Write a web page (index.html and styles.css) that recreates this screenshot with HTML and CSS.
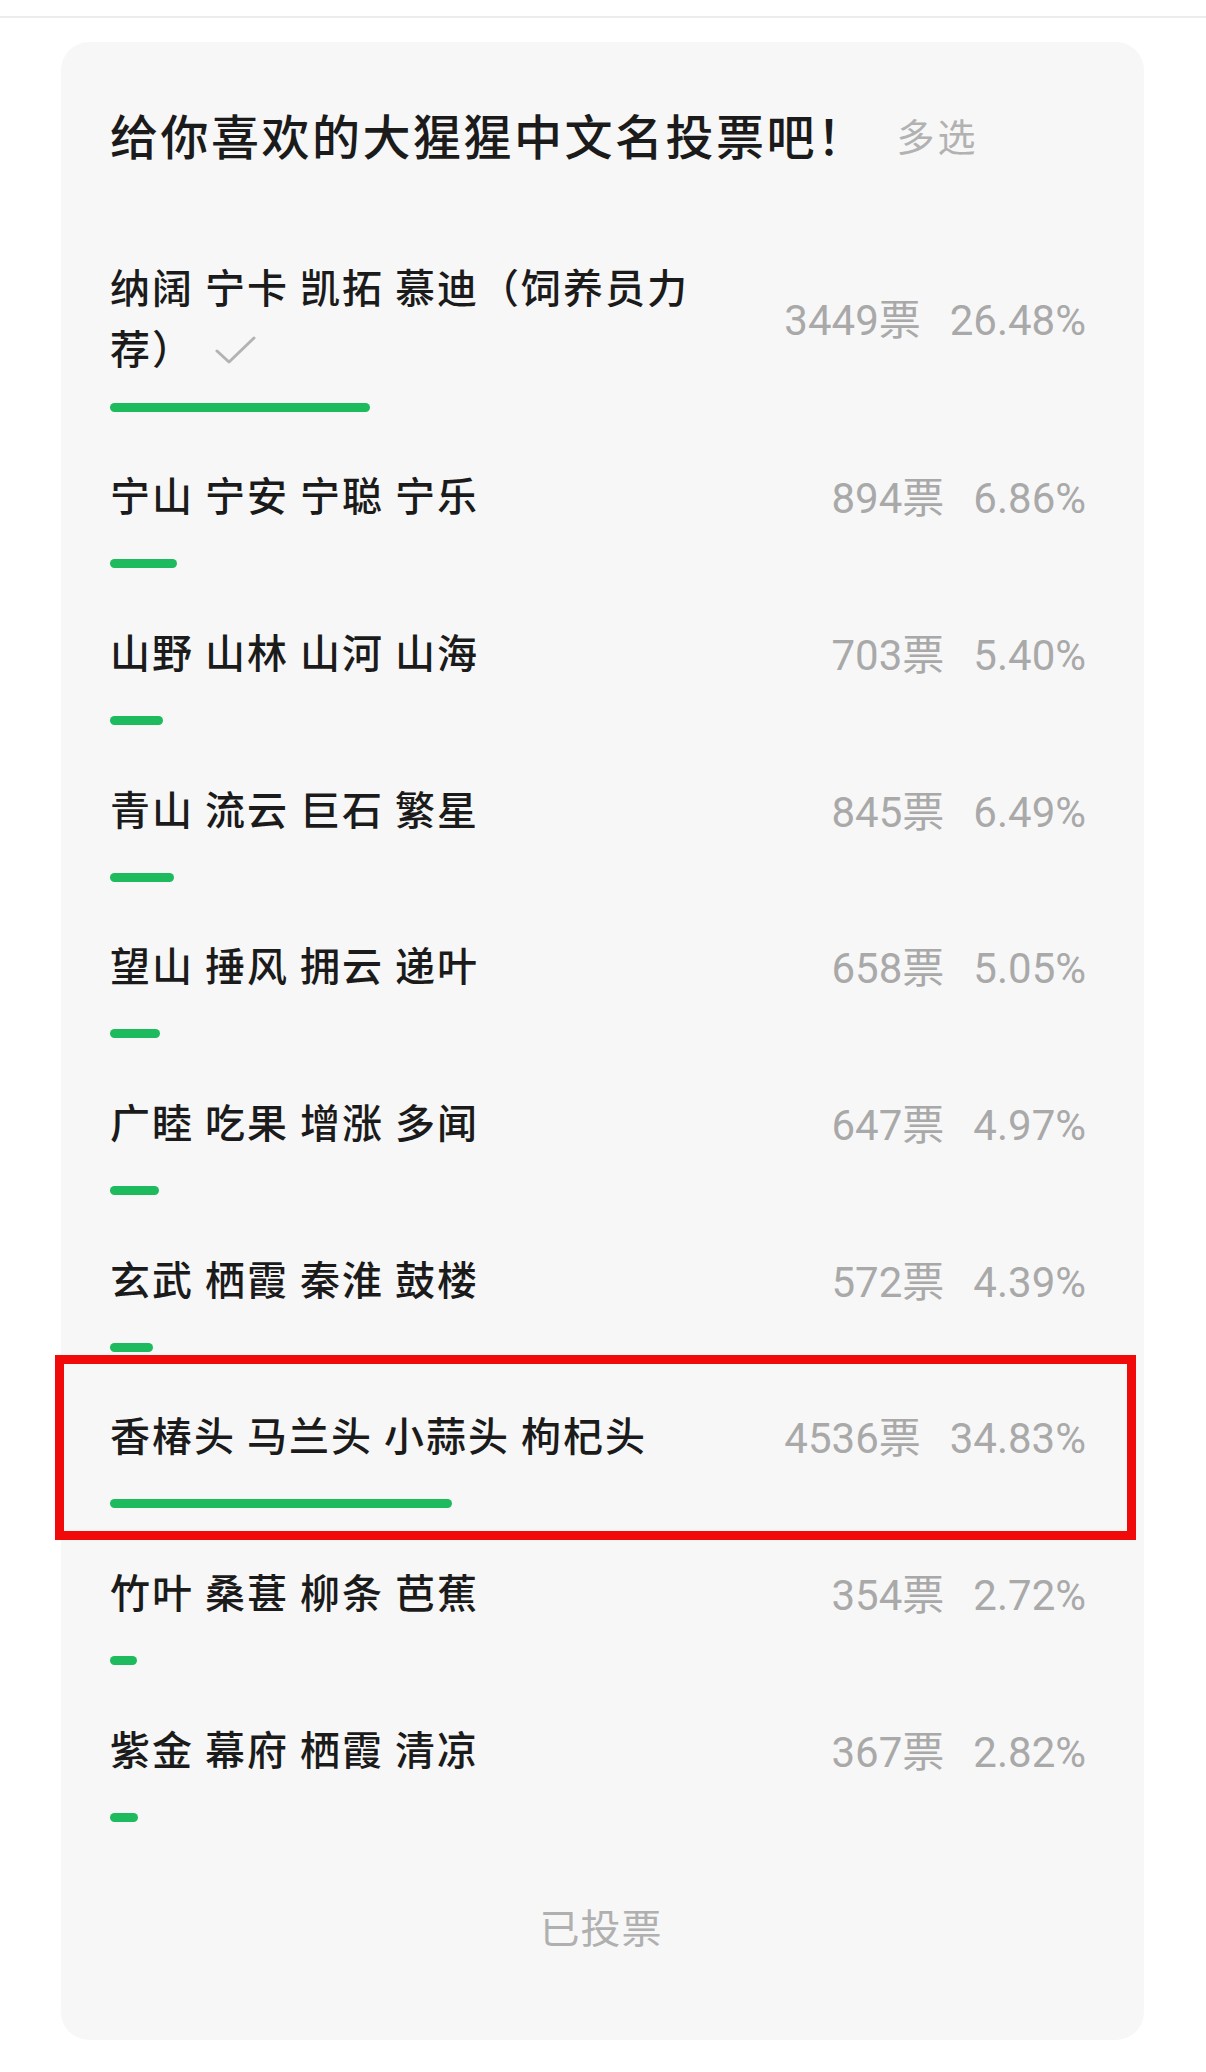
FILE: index.html
```html
<!DOCTYPE html>
<html lang="zh">

<head>
    <meta charset="UTF-8" />
    <meta name="viewport" content="width=device-width, initial-scale=1.0" />
    <title>投票</title>
    <link rel="stylesheet" href="styles.css">
</head>

<body>
    <div class="top-line"></div>

    <div class="poll-card">
        <div class="poll-title">
            <h1>给你喜欢的大猩猩中文名投票吧！</h1>
            <span class="poll-type">多选</span>
        </div>

        <div class="poll-list">
            <div class="option">
                <div class="option-head">
                    <div class="option-text">纳阔 宁卡 凯拓 慕迪（饲养员力荐）<svg class="check" width="42" height="30" viewBox="0 0 42 30"><path d="M2 15 L14 26 L39 2" fill="none" stroke="#b3b3b3" stroke-width="3" stroke-linecap="round" stroke-linejoin="round"/></svg></div>
                    <div class="option-stats"><span>3449票</span><span class="pct">26.48%</span></div>
                </div>
                <div class="bar" style="width: 26.48%"></div>
            </div>
            <div class="option">
                <div class="option-head">
                    <div class="option-text">宁山 宁安 宁聪 宁乐</div>
                    <div class="option-stats"><span>894票</span><span class="pct">6.86%</span></div>
                </div>
                <div class="bar" style="width: 6.86%"></div>
            </div>
            <div class="option">
                <div class="option-head">
                    <div class="option-text">山野 山林 山河 山海</div>
                    <div class="option-stats"><span>703票</span><span class="pct">5.40%</span></div>
                </div>
                <div class="bar" style="width: 5.40%"></div>
            </div>
            <div class="option">
                <div class="option-head">
                    <div class="option-text">青山 流云 巨石 繁星</div>
                    <div class="option-stats"><span>845票</span><span class="pct">6.49%</span></div>
                </div>
                <div class="bar" style="width: 6.49%"></div>
            </div>
            <div class="option">
                <div class="option-head">
                    <div class="option-text">望山 捶风 拥云 递叶</div>
                    <div class="option-stats"><span>658票</span><span class="pct">5.05%</span></div>
                </div>
                <div class="bar" style="width: 5.05%"></div>
            </div>
            <div class="option">
                <div class="option-head">
                    <div class="option-text">广睦 吃果 增涨 多闻</div>
                    <div class="option-stats"><span>647票</span><span class="pct">4.97%</span></div>
                </div>
                <div class="bar" style="width: 4.97%"></div>
            </div>
            <div class="option">
                <div class="option-head">
                    <div class="option-text">玄武 栖霞 秦淮 鼓楼</div>
                    <div class="option-stats"><span>572票</span><span class="pct">4.39%</span></div>
                </div>
                <div class="bar" style="width: 4.39%"></div>
            </div>
            <div class="option">
                <div class="highlight"></div>
                <div class="option-head">
                    <div class="option-text">香椿头 马兰头 小蒜头 枸杞头</div>
                    <div class="option-stats"><span>4536票</span><span class="pct">34.83%</span></div>
                </div>
                <div class="bar" style="width: 34.83%"></div>
            </div>
            <div class="option">
                <div class="option-head">
                    <div class="option-text">竹叶 桑葚 柳条 芭蕉</div>
                    <div class="option-stats"><span>354票</span><span class="pct">2.72%</span></div>
                </div>
                <div class="bar" style="width: 2.72%"></div>
            </div>
            <div class="option">
                <div class="option-head">
                    <div class="option-text">紫金 幕府 栖霞 清凉</div>
                    <div class="option-stats"><span>367票</span><span class="pct">2.82%</span></div>
                </div>
                <div class="bar" style="width: 2.82%"></div>
            </div>
        </div>

        <div class="voted">已投票</div>
    </div>
</body>

</html>
```

FILE: styles.css
```css
body {
    margin: 0;
    font-family: "Noto Sans CJK SC", sans-serif;
    background-color: #fff;
    color: #1b1b1b;
}

.top-line {
    height: 2px;
    margin-top: 16px;
    background-color: #ececec;
}

.poll-card {
    margin: 24px 62px 0 61px;
    padding: 62px 52px 84px 49px;
    background-color: #f7f7f7;
    border-radius: 28px;
}

.poll-title {
    display: flex;
    align-items: center;
}

.poll-title h1 {
    margin: 0;
    font-size: 48px;
    line-height: 60px;
    font-weight: 500;
    letter-spacing: 2.5px;
}

.poll-type {
    margin-left: 29px;
    font-size: 38px;
    letter-spacing: 3px;
    color: #b2b2b2;
}

.poll-list {
    margin-top: 91.5px;
}

.option {
    position: relative;
    padding-bottom: 43.7px;
}

.option-head {
    display: flex;
    align-items: center;
    min-height: 79px;
}

.option-text {
    width: 600px;
    font-size: 40px;
    line-height: 61px;
    font-weight: 500;
    letter-spacing: 2px;
}

.check {
    margin-left: 21px;
    vertical-align: -2px;
}

.option-stats {
    margin-left: auto;
    padding-right: 6px;
    font-family: Roboto, "Noto Sans CJK SC", sans-serif;
    font-size: 42px;
    color: #a9a9a9;
    white-space: nowrap;
}

.option-stats .pct {
    margin-left: 29px;
}

.bar {
    height: 9px;
    margin-top: 25px;
    border-radius: 5px;
    background-color: #1eba5e;
}

/* red annotation box */
.highlight {
    position: absolute;
    top: -40px;
    left: -55px;
    right: -44px;
    height: 185px;
    box-sizing: border-box;
    border: 9px solid #f00a0a;
}

.voted {
    margin-top: 31px;
    text-align: center;
    font-size: 40px;
    line-height: 60px;
    letter-spacing: 1px;
    color: #b0b0b0;
}
```
